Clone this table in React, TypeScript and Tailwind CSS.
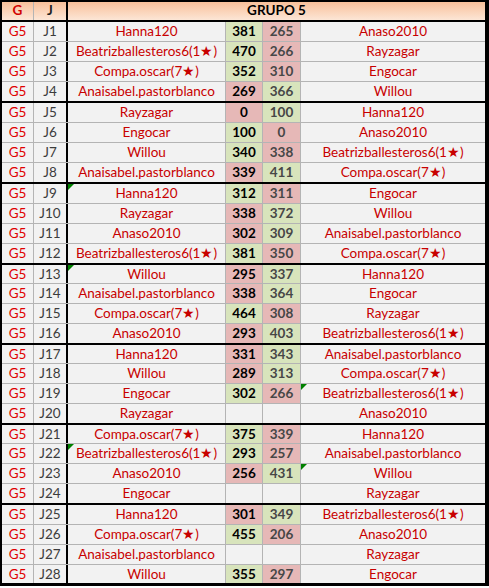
import React from "react";

type Row = {
  j: string;
  a: string;
  s1: number | null;
  s2: number | null;
  b: string;
  triA?: boolean;
  triB?: boolean;
  h: number;
};

const B = "Beatrizballesteros6(1★)";
const C = "Compa.oscar(7★)";
const AP = "Anaisabel.pastorblanco";

const raw: [string, number | null, number | null, string, string?][] = [
  ["Hanna120", 381, 265, "Anaso2010"],
  [B, 470, 266, "Rayzagar"],
  [C, 352, 310, "Engocar"],
  [AP, 269, 366, "Willou"],
  ["Rayzagar", 0, 100, "Hanna120"],
  ["Engocar", 100, 0, "Anaso2010"],
  ["Willou", 340, 338, B],
  [AP, 339, 411, C],
  ["Hanna120", 312, 311, "Engocar", "a"],
  ["Rayzagar", 338, 372, "Willou"],
  ["Anaso2010", 302, 309, AP],
  [B, 381, 350, C],
  ["Willou", 295, 337, "Hanna120", "a"],
  [AP, 338, 364, "Engocar"],
  [C, 464, 308, "Rayzagar"],
  ["Anaso2010", 293, 403, B],
  ["Hanna120", 331, 343, AP],
  ["Willou", 289, 313, C],
  ["Engocar", 302, 266, B, "b"],
  ["Rayzagar", null, null, "Anaso2010"],
  [C, 375, 339, "Hanna120"],
  [B, 293, 257, AP, "a"],
  ["Anaso2010", 256, 431, "Willou", "b"],
  ["Engocar", null, null, "Rayzagar"],
  ["Hanna120", 301, 349, B],
  [C, 455, 206, "Anaso2010"],
  [AP, null, null, "Rayzagar"],
  ["Willou", 355, 297, "Engocar"],
];

const rows: Row[] = raw.map(([a, s1, s2, b, t], i) => {
  const g = Math.floor(i / 4);
  // rows 13-24 sit one pixel tighter per group of four
  const h = g >= 3 && g <= 5 && i % 4 === 0 ? 19 : 20;
  return { j: `J${i + 1}`, a, s1, s2, b, triA: t === "a", triB: t === "b", h };
});

function Tri() {
  return (
    <svg className="absolute left-0 top-0" width="6" height="6" viewBox="0 0 6 6">
      <polygon points="0,0 6,0 0,6" fill="#008000" />
    </svg>
  );
}

function scoreBg(me: number | null, other: number | null) {
  if (me === null || other === null) return "bg-[#f2f2f2]";
  return me > other ? "bg-[#d8e4bc]" : "bg-[#e6b8b7]";
}

export default function App() {
  return (
    <div className="w-[489px] bg-white font-['Lato',sans-serif] text-[13.5px] leading-none">
      <div className="border-l-2 border-t-2 border-r-4 border-b-[3px] border-black">
        <div className="flex h-[20px] border-b-2 border-black bg-gradient-to-b from-[#f8c09a] to-[#fce6d6]">
          <div className="flex w-[32px] items-center justify-center border-r border-[#b4b4b4] font-bold text-[#d00000]">
            G
          </div>
          <div className="flex w-[34px] items-center justify-center border-r-2 border-black font-bold text-[#1f1f1f]">
            J
          </div>
          <div className="flex flex-1 items-center justify-center font-bold text-black">
            GRUPO 5
          </div>
        </div>
        {rows.map((r, i) => {
          const last = i % 4 === 3;
          const end = i === rows.length - 1;
          const line = end
            ? ""
            : last
              ? "border-b-2 border-black"
              : "border-b border-[#b4b4b4]";
          return (
            <div
              key={r.j}
              className={`flex bg-[#f2f2f2] ${line}`}
              style={{ height: end ? 18 : last ? r.h + 1 : r.h }}
            >
              <div className="flex w-[32px] items-center justify-center border-r border-[#b4b4b4] pt-px text-[#e00000]">
                G5
              </div>
              <div className="flex w-[34px] items-center justify-center border-r-2 border-black pt-px text-[#3c3c3c]">
                {r.j}
              </div>
              <div className="relative flex w-[158px] items-center justify-center border-r border-[#b4b4b4] pt-px text-[#c80000]">
                {r.triA && <Tri />}
                {r.a}
              </div>
              <div
                className={`flex w-[37px] items-center justify-center border-r border-[#b4b4b4] pt-px font-bold text-black ${scoreBg(r.s1, r.s2)}`}
              >
                {r.s1}
              </div>
              <div
                className={`flex w-[38px] items-center justify-center border-r border-[#b4b4b4] pt-px font-bold text-[#474747] ${scoreBg(r.s2, r.s1)}`}
              >
                {r.s2}
              </div>
              <div className="relative flex flex-1 items-center justify-center pt-px text-[#c80000]">
                {r.triB && <Tri />}
                {r.b}
              </div>
            </div>
          );
        })}
      </div>
    </div>
  );
}
